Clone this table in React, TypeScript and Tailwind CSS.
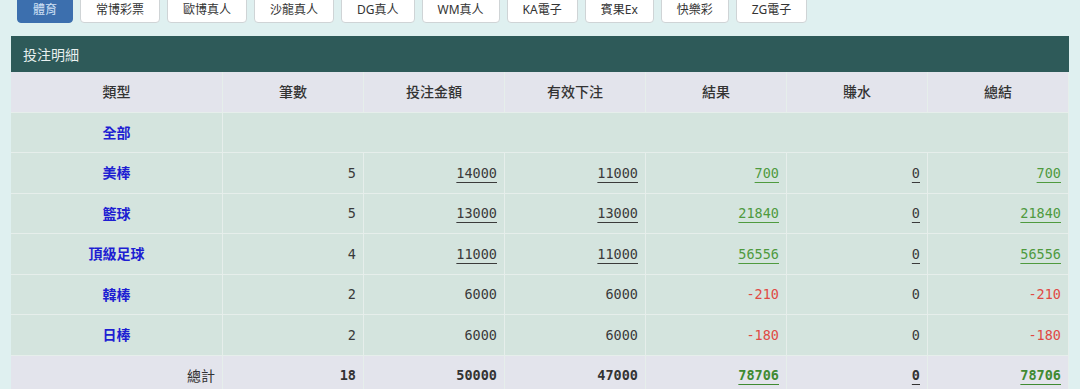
import React from "react";

const tabs = ["體育", "常博彩票", "歐博真人", "沙龍真人", "DG真人", "WM真人", "KA電子", "賓果Ex", "快樂彩", "ZG電子"];
const heads = ["類型", "筆數", "投注金額", "有效下注", "結果", "賺水", "總結"];

type Row = { name: string; cnt: string; bet: string; valid: string; res: string; water: string; total: string; link: boolean; neg: boolean };
const rows: Row[] = [
  { name: "美棒", cnt: "5", bet: "14000", valid: "11000", res: "700", water: "0", total: "700", link: true, neg: false },
  { name: "籃球", cnt: "5", bet: "13000", valid: "13000", res: "21840", water: "0", total: "21840", link: true, neg: false },
  { name: "頂級足球", cnt: "4", bet: "11000", valid: "11000", res: "56556", water: "0", total: "56556", link: true, neg: false },
  { name: "韓棒", cnt: "2", bet: "6000", valid: "6000", res: "-210", water: "0", total: "-210", link: false, neg: true },
  { name: "日棒", cnt: "2", bet: "6000", valid: "6000", res: "-180", water: "0", total: "-180", link: false, neg: true },
];

const cjk = "font-['Noto_Sans','Noto_Sans_CJK_TC',sans-serif]";
const mono = "font-['DejaVu_Sans_Mono',monospace]";
const cell = "h-[40.5px] border-r border-b border-[#e6eeeb] flex items-center";
const num = `${cell} justify-end pr-[7px] ${mono} text-[13.5px]`;

function Val({ v, link, color }: { v: string; link: boolean; color: string }) {
  return (
    <span className={`${color} ${link ? "underline decoration-1 underline-offset-[4px]" : ""}`}>{v}</span>
  );
}

export default function App() {
  return (
    <div className={`w-[1080px] h-[389px] overflow-hidden bg-[#dff0f0] ${cjk}`}>
      <div className="flex gap-[7px] pl-[17px] -mt-[4px]">
        {tabs.map((t, i) => (
          <div
            key={t}
            className={`h-[27px] px-[15px] flex items-center justify-center text-[12px] rounded-[4px] border ${
              i === 0 ? "bg-[#3c6fae] border-[#3c6fae] text-[#cfe0f5]" : "bg-white border-[#cfd4d6] text-[#333]"
            }`}
          >
            {t}
          </div>
        ))}
      </div>
      <div className="mx-[11px] mt-[13px]">
        <div className="h-[36px] bg-[#2e5a59] text-[#e8f0ef] text-[14px] flex items-center pl-[12px]">投注明細</div>
        <div className="grid grid-cols-[212px_repeat(6,141px)] text-[14px]">
          {heads.map((h) => (
            <div key={h} className={`${cell} justify-center bg-[#e3e4ec] text-[#333] font-medium`}>{h}</div>
          ))}
          <div className={`${cell} justify-center bg-[#d4e4de] text-[#1e1ed2] font-bold`}>全部</div>
          <div className={`${cell} col-span-6 bg-[#d4e4de]`} />
          {rows.map((r) => {
            const c = r.neg ? "text-[#e04a45]" : "text-[#4f9a3e]";
            return (
              <React.Fragment key={r.name}>
                <div className={`${cell} justify-center bg-[#d4e4de] text-[#1e1ed2] font-bold`}>{r.name}</div>
                <div className={`${num} bg-[#d4e4de] text-[#3a3a3a]`}>{r.cnt}</div>
                <div className={`${num} bg-[#d4e4de]`}><Val v={r.bet} link={r.link} color="text-[#3a3a3a]" /></div>
                <div className={`${num} bg-[#d4e4de]`}><Val v={r.valid} link={r.link} color="text-[#3a3a3a]" /></div>
                <div className={`${num} bg-[#d4e4de]`}><Val v={r.res} link={r.link} color={c} /></div>
                <div className={`${num} bg-[#d4e4de]`}><Val v={r.water} link={r.link} color="text-[#3a3a3a]" /></div>
                <div className={`${num} bg-[#d4e4de]`}><Val v={r.total} link={r.link} color={c} /></div>
              </React.Fragment>
            );
          })}
          <div className={`${cell} justify-end pr-[7px] bg-[#e3e4ec] text-[#333]`}>總計</div>
          <div className={`${num} bg-[#e3e4ec] font-bold text-[#333]`}>18</div>
          <div className={`${num} bg-[#e3e4ec] font-bold text-[#333]`}>50000</div>
          <div className={`${num} bg-[#e3e4ec] font-bold text-[#333]`}>47000</div>
          <div className={`${num} bg-[#e3e4ec] font-bold`}><Val v="78706" link color="text-[#3f8a32]" /></div>
          <div className={`${num} bg-[#e3e4ec] font-bold`}><Val v="0" link color="text-[#333]" /></div>
          <div className={`${num} bg-[#e3e4ec] font-bold`}><Val v="78706" link color="text-[#3f8a32]" /></div>
        </div>
      </div>
    </div>
  );
}
